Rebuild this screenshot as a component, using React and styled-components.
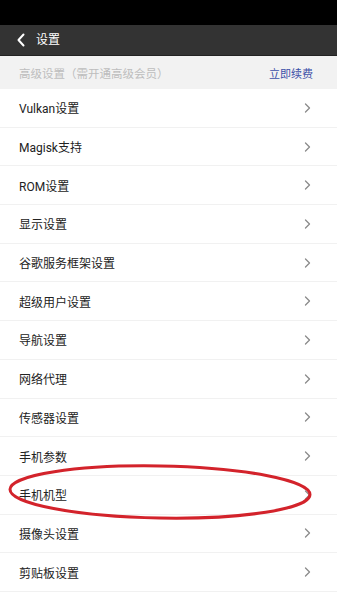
import React from "react";
import styled, { createGlobalStyle } from "styled-components";

const Global = createGlobalStyle`
  html, body { margin: 0; padding: 0; background: #fff; }
  body { font-family: Roboto, "Noto Sans CJK SC", "Noto Sans", sans-serif; }
`;

const Page = styled.div`
  position: relative;
  width: 337px;
  height: 600px;
  overflow: hidden;
  background: #fff;
`;

const StatusBar = styled.div`
  height: 25px;
  background: #000;
`;

const Header = styled.div`
  height: 30px;
  background: #333333;
  display: flex;
  align-items: center;
  padding-left: 16px;
  gap: 10px;
  border-bottom: 1px solid #222;
`;

const Title = styled.span`
  color: #fff;
  font-size: 12px;
  line-height: 1;
`;

const Band = styled.div`
  height: 33px;
  background: #f2f2f2;
  display: flex;
  align-items: center;
  justify-content: space-between;
  padding: 0 24px 0 19px;
`;

const BandText = styled.span`
  color: #bdbdbd;
  font-size: 11.5px;
`;

const BandLink = styled.span`
  color: #3c50a8;
  font-size: 11px;
`;

const List = styled.div`
  display: flex;
  flex-direction: column;
`;

const Row = styled.div`
  height: 38.7px;
  box-sizing: border-box;
  display: flex;
  align-items: center;
  justify-content: space-between;
  padding: 0 26px 0 19px;
  border-bottom: 1px solid #f1f1f1;
`;

const Label = styled.span`
  color: #222;
  font-size: 12px;
`;

const Ellipse = styled.svg`
  position: absolute;
  left: 7px;
  top: 463px;
  pointer-events: none;
`;

const Back = () => (
  <svg width="10" height="14" viewBox="0 0 10 14">
    <path d="M7.5 1.5 L2.5 7 L7.5 12.5" fill="none" stroke="#fff" strokeWidth="2" strokeLinecap="round" strokeLinejoin="round" />
  </svg>
);

const Chevron = () => (
  <svg width="7" height="10" viewBox="0 0 7 10">
    <path d="M1.5 1 L5.5 5 L1.5 9" fill="none" stroke="#8a8a8a" strokeWidth="1.3" strokeLinecap="round" strokeLinejoin="round" />
  </svg>
);

const items = [
  "Vulkan设置",
  "Magisk支持",
  "ROM设置",
  "显示设置",
  "谷歌服务框架设置",
  "超级用户设置",
  "导航设置",
  "网络代理",
  "传感器设置",
  "手机参数",
  "手机机型",
  "摄像头设置",
  "剪贴板设置",
];

export default function App() {
  return (
    <Page>
      <Global />
      <StatusBar />
      <Header>
        <Back />
        <Title>设置</Title>
      </Header>
      <Band>
        <BandText>高级设置（需开通高级会员）</BandText>
        <BandLink>立即续费</BandLink>
      </Band>
      <List>
        {items.map((t) => (
          <Row key={t}>
            <Label>{t}</Label>
            <Chevron />
          </Row>
        ))}
      </List>
      <Ellipse width="308" height="62" viewBox="0 0 308 62">
        <ellipse cx="153" cy="29" rx="150" ry="26" fill="none" stroke="#d3232b" strokeWidth="3" transform="rotate(1 153 29)" />
      </Ellipse>
    </Page>
  );
}
